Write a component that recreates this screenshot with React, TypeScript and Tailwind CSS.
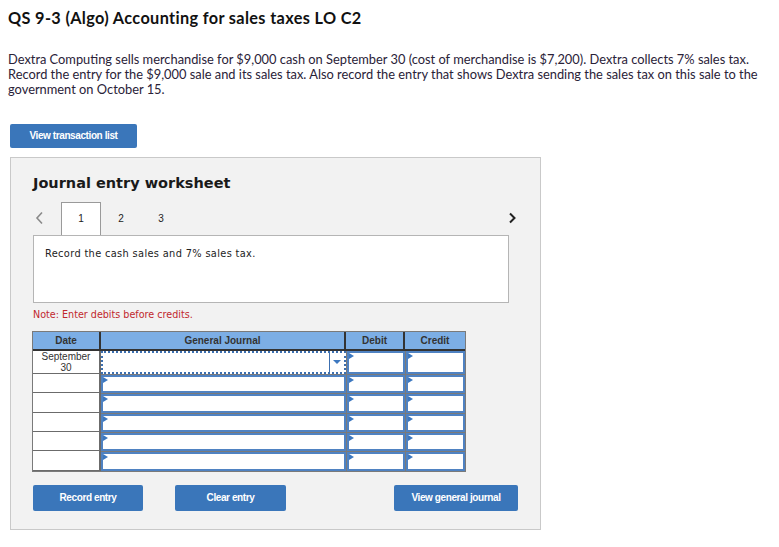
import React from 'react';

const Marker: React.FC = () => (
  <span className="absolute left-0 top-0 w-0 h-0 border-t-[3px] border-b-[3px] border-l-[5px] border-t-transparent border-b-transparent border-l-[#3c78c0]" />
);

const InputCell: React.FC<{ marker?: boolean }> = ({ marker = true }) => (
  <div className="relative h-full border-2 border-[#4f82c2] bg-white">{marker && <Marker />}</div>
);

const Chevron: React.FC<{ dir: 'left' | 'right'; className?: string }> = ({ dir, className }) => (
  <svg width="9" height="14" viewBox="0 0 9 14" className={className}>
    <path d={dir === 'left' ? 'M7 1.5 L2 7 L7 12.5' : 'M2 2.5 L6.5 7 L2 11.5'} fill="none" stroke="currentColor" strokeWidth={dir === 'left' ? 1.6 : 2} />
  </svg>
);

const App: React.FC = () => {
  const rows = [0, 1, 2, 3, 4];

  return (
    <div className="w-[779px] h-[547px] bg-white text-[#2a2238]" style={{ fontFamily: 'Lato, "Open Sans", sans-serif' }}>
      <div className="px-2 pt-[8px]">
        <h1 className="text-[16.3px] font-bold leading-[20px] tracking-[0.35px] text-[#111]">QS 9-3 (Algo) Accounting for sales taxes LO C2</h1>
        <p className="mt-[24px] text-[12.85px] leading-[15px] pr-1">
          Dextra Computing sells merchandise for $9,000 cash on September 30 (cost of merchandise is $7,200). Dextra collects 7% sales tax. Record the entry for the $9,000 sale and its sales tax. Also record the entry that shows Dextra sending the sales tax on this sale to the government on October 15.
        </p>
      </div>

      <div className="pl-[10px] mt-[24px]">
        <button className="w-[127px] h-[24px] rounded-[2px] bg-[#3a76ba] text-white text-[10px] font-bold tracking-[-0.4px]" style={{ fontFamily: '"Liberation Sans", Arial, sans-serif' }}>
          View transaction list
        </button>

        <div className="mt-[9px] w-[531px] h-[373px] bg-[#f2f2f2] border border-[#c9c9c9] pl-[22px]" style={{ fontFamily: '"DejaVu Sans", Verdana, sans-serif' }}>
          <h2 className="mt-[16px] text-[14.5px] font-bold leading-[18px] text-[#1a1a1a]">Journal entry worksheet</h2>

          <div className="mt-[10px] flex items-stretch h-[33px] w-[476px] text-[10px] text-[#222]" style={{ fontFamily: '"Liberation Sans", Arial, sans-serif' }}>
            <span className="w-[28px] flex items-center justify-start pl-[2px] text-[#8a8a8a]">
              <Chevron dir="left" />
            </span>
            <div className="w-[40px] bg-white border border-b-0 border-[#9a9a9a] flex items-center justify-center">1</div>
            <div className="w-[40px] flex items-center justify-center">2</div>
            <div className="w-[40px] flex items-center justify-center">3</div>
            <span className="ml-auto w-[10px] mr-[-8px] flex items-center justify-center text-[#222]">
              <Chevron dir="right" />
            </span>
          </div>

          <div className="w-[476px] h-[68px] bg-white border border-[#b5b5b5] px-[11px] pt-[11px] text-[9.8px] tracking-[0.35px] text-[#222]">
            Record the cash sales and 7% sales tax.
          </div>

          <p className="mt-[5px] text-[9.6px] text-[#c1272d]">Note: Enter debits before credits.</p>

          <div className="mt-[9px] -ml-[1px] w-[434px] border border-[#7a7a7a]" style={{ fontFamily: '"Liberation Sans", Arial, sans-serif' }}>
            <div className="grid grid-cols-[68px_245px_59px_60px] h-[19px] bg-[#7caee5] border-b-2 border-[#333] text-[10px] font-bold text-[#333]">
              <div className="flex items-center justify-center border-r-2 border-[#333]">Date</div>
              <div className="flex items-center justify-center border-r-2 border-[#333]">General Journal</div>
              <div className="flex items-center justify-center border-r-2 border-[#333]">Debit</div>
              <div className="flex items-center justify-center">Credit</div>
            </div>

            <div className="grid grid-cols-[68px_245px_59px_60px] h-[23px] bg-[#7a7a7a]">
              <div className="bg-white border-r-2 border-b border-[#6b6b6b] flex flex-col items-center justify-center text-[10px] leading-[11px] text-[#333]">
                <span>September</span>
                <span>30</span>
              </div>
              <div className="flex bg-white border-2 border-dotted border-[#3c6fb0]">
                <div className="flex-1" />
                <div className="w-[15px] border-l border-[#3c6fb0] flex items-center justify-center">
                  <span className="w-0 h-0 border-l-[4px] border-r-[4px] border-t-[4px] border-l-transparent border-r-transparent border-t-[#3c78c0]" />
                </div>
              </div>
              <div className="pl-px"><InputCell /></div>
              <div className="pl-px"><InputCell /></div>
            </div>

            {rows.map((r) => (
              <div key={r} className="grid grid-cols-[68px_245px_59px_60px] h-[19.4px] bg-[#7a7a7a]">
                <div className="bg-white border-r-2 border-b border-[#6b6b6b]" />
                <div className="pt-px"><InputCell /></div>
                <div className="pt-px pl-px"><InputCell /></div>
                <div className="pt-px pl-px"><InputCell /></div>
              </div>
            ))}
          </div>

          <div className="mt-[13px] flex w-[485px] text-[10px] font-bold text-white tracking-[-0.4px]" style={{ fontFamily: '"Liberation Sans", Arial, sans-serif' }}>
            <button className="w-[110px] h-[26px] rounded-[2px] bg-[#3a76ba]">Record entry</button>
            <button className="ml-[32px] w-[111px] h-[26px] rounded-[2px] bg-[#3a76ba]">Clear entry</button>
            <button className="ml-auto w-[124px] h-[26px] rounded-[2px] bg-[#3a76ba]">View general journal</button>
          </div>
        </div>
      </div>
    </div>
  );
};

export default App;
